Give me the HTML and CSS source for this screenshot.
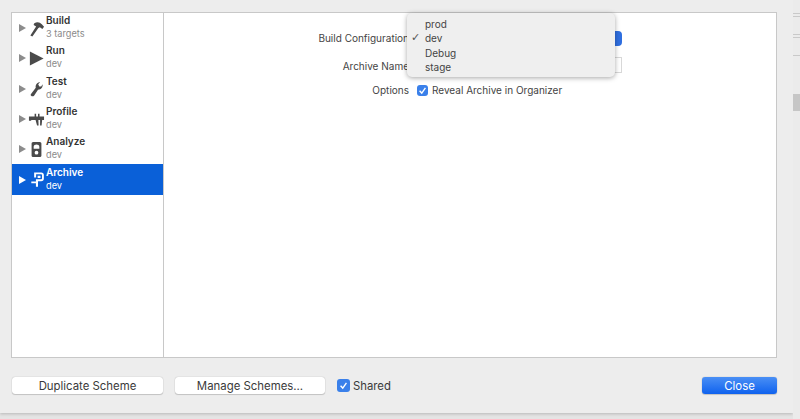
FILE: index.html
```html
<!DOCTYPE html>
<html lang="en">
<head>
    <meta charset="UTF-8">
    <title>Scheme Editor</title>
    <link rel="stylesheet" href="styles.css">
</head>
<body>
    <div class="sheet">
        <div class="panel">
            <!-- Scheme actions -->
            <ul class="sidebar">
                <li class="action">
                    <span class="arrow"></span>
                    <svg class="icon" viewBox="0 0 18 18"><path d="M2.5 16.4 L8.6 7 L6 5.4 L6.4 3.8 C9.4 1.4 12.4 2 14.6 4.6 L17 7.2 L15.2 9.4 L12.6 7.6 L11 8.6 L4.6 17.6 Z"/></svg>
                    <div class="action-text"><b>Build</b><span>3 targets</span></div>
                </li>
                <li class="action">
                    <span class="arrow"></span>
                    <svg class="icon" viewBox="0 0 18 18"><path d="M2 1.5 L16.5 9 L2 16.5 Z"/></svg>
                    <div class="action-text"><b>Run</b><span>dev</span></div>
                </li>
                <li class="action">
                    <span class="arrow"></span>
                    <svg class="icon" viewBox="0 0 18 18"><path d="M4 17.2 C3 17 2.6 16 3 15.2 L8.2 8.2 C7.6 5 9.6 2.4 12.8 2 L10.8 4.6 L12 7 L14 7 L15.4 4.6 C16 7.6 14 10.4 10.6 10.4 L6.4 16.6 C5.8 17.2 5 17.4 4 17.2 Z"/></svg>
                    <div class="action-text"><b>Test</b><span>dev</span></div>
                </li>
                <li class="action">
                    <span class="arrow"></span>
                    <svg class="icon" viewBox="0 0 18 18"><path d="M1 5.8 H7 V2.8 H8.6 V5.8 H10.6 V2.8 H12.2 V5.8 H17 V9.4 H15 L14.4 15.4 H12.8 V9.4 H11 L11.2 15.4 H9.6 L8 9.4 H3.4 V10.4 H1 Z"/></svg>
                    <div class="action-text"><b>Profile</b><span>dev</span></div>
                </li>
                <li class="action">
                    <span class="arrow"></span>
                    <svg class="icon" viewBox="0 0 18 18"><path fill-rule="evenodd" d="M5.5 1 H12.5 C13.6 1 14.2 1.8 14.2 2.8 V15.4 C14.2 16.4 13.6 17 12.5 17 H5.5 C4.4 17 3.8 16.4 3.8 15.4 V2.8 C3.8 1.8 4.4 1 5.5 1 Z M6 8.2 H12 V6.2 C12 2.8 6 2.8 6 6.2 Z M9 10.4 A2 2 0 1 0 9 14.4 A2 2 0 1 0 9 10.4 Z"/></svg>
                    <div class="action-text"><b>Analyze</b><span>dev</span></div>
                </li>
                <li class="action selected">
                    <span class="arrow"></span>
                    <svg class="icon" viewBox="0 0 18 18"><path fill-rule="evenodd" d="M6.5 1.5 H14 C15.8 1.5 16.8 2.6 16.8 4.2 V8 C16.8 9.8 15.8 10.8 14 10.8 H10.6 V16.8 H8.4 V13 H3.5 V11.2 H8.4 V8.8 H14 C14.5 8.8 14.8 8.5 14.8 8 V4.2 C14.8 3.7 14.5 3.4 14 3.4 H8.6 V7 H6.5 Z M10.2 5 H13.2 V7.4 H10.2 Z"/></svg>
                    <div class="action-text"><b>Archive</b><span>dev</span></div>
                </li>
            </ul>

            <!-- Archive options -->
            <div class="form">
                <div class="form-row">
                    <label>Build Configuration</label>
                    <div class="select"><span class="stepper"></span></div>
                </div>
                <div class="form-row">
                    <label>Archive Name</label>
                    <div class="text-field"></div>
                </div>
                <div class="form-row">
                    <label>Options</label>
                    <span class="checkbox small">
                        <svg viewBox="0 0 12 12"><path d="M2.8 6.2 L5.2 8.8 L9.2 3.2"/></svg>
                    </span>
                    <span class="check-label">Reveal Archive in Organizer</span>
                </div>

                <ul class="menu">
                    <li>prod</li>
                    <li class="checked">dev</li>
                    <li>Debug</li>
                    <li>stage</li>
                </ul>
            </div>
        </div>

        <div class="footer">
            <button class="btn duplicate">Duplicate Scheme</button>
            <button class="btn manage">Manage Schemes...</button>
            <span class="checkbox">
                <svg viewBox="0 0 12 12"><path d="M2.8 6.2 L5.2 8.8 L9.2 3.2"/></svg>
            </span>
            <span class="shared">Shared</span>
            <button class="btn primary">Close</button>
        </div>
    </div>

    <!-- Window behind the sheet -->
    <div class="backdrop">
        <span class="tick first"></span>
        <span class="tick"></span>
        <span class="tick gap"></span>
        <span class="tick"></span>
        <span class="tick gap"></span>
        <span class="scroll-thumb"></span>
    </div>
</body>
</html>
```

FILE: styles.css
```css
/* General Reset */
* {
    box-sizing: border-box;
    margin: 0;
    padding: 0;
}

body {
    display: flex;
    align-items: flex-start;
    width: 800px;
    height: 419px;
    overflow: hidden;
    background-color: #e4e4e4;
    font-family: Inter, "Liberation Sans", Arial, sans-serif;
    font-size: 10px;
    color: #3a3a3a;
}

/* Sheet */
.sheet {
    width: 793px;
    height: 413px;
    flex-shrink: 0;
    padding: 12px 16px 0 11px;
    background-color: #ededed;
    box-shadow: 0 1px 3px rgba(0, 0, 0, 0.2);
}

/* Strip of the window behind */
.backdrop {
    flex: 1;
    height: 419px;
    padding-top: 13px;
    background-color: #ebebeb;
}

.tick {
    display: block;
    height: 1px;
    margin-bottom: 2px;
    background-color: #c9c9c9;
}

.tick.gap {
    margin-top: 17px;
}

.scroll-thumb {
    display: block;
    height: 17px;
    margin-top: 38px;
    background-color: #c6c6c6;
}

.panel {
    display: flex;
    height: 346px;
    background-color: #fff;
    border: 1px solid #c8c8c8;
}

/* Sidebar */
.sidebar {
    width: 152px;
    flex-shrink: 0;
    list-style: none;
    border-right: 1px solid #c8c8c8;
}

.action {
    display: flex;
    align-items: center;
    height: 30.3px;
    padding-left: 7px;
}

.arrow {
    width: 0;
    height: 0;
    border-left: 7px solid #8c8c8c;
    border-top: 4.5px solid transparent;
    border-bottom: 4.5px solid transparent;
    margin-right: 2px;
}

.icon {
    width: 17px;
    height: 17px;
    margin-right: 1px;
    fill: #4a4a4a;
}

.action-text {
    display: flex;
    flex-direction: column;
    line-height: 12px;
    margin-top: -2px;
}

.action-text b {
    font-size: 10px;
    font-weight: 600;
    color: #333;
}

.action-text span {
    font-size: 9.2px;
    color: #8a8a8a;
    margin-top: 2px;
}

.selected {
    background-color: #0a60d8;
}

.selected .arrow {
    border-left-color: #fff;
}

.selected .icon {
    fill: #fff;
}

.selected .action-text b,
.selected .action-text span {
    color: #fff;
}

/* Form */
.form {
    position: relative;
    flex: 1;
    padding-top: 15px;
}

.form-row {
    display: flex;
    align-items: center;
    height: 20px;
    margin-bottom: 8px;
}

.form-row:nth-child(2) {
    margin-bottom: 4px;
}

.form-row label {
    width: 245px;
    text-align: right;
    color: #444;
    flex-shrink: 0;
}

.select {
    position: relative;
    width: 205px;
    height: 15px;
    margin-left: 8px;
}

.stepper {
    position: absolute;
    right: 0;
    top: 0;
    width: 14px;
    height: 15px;
    border-radius: 4px;
    background-color: #2f6fe0;
}

.text-field {
    width: 205px;
    height: 16px;
    margin-left: 8px;
    margin-bottom: 2px;
    background-color: #fff;
    border: 1px solid #d8d8d8;
}

.checkbox {
    display: inline-flex;
    align-items: center;
    justify-content: center;
    width: 13px;
    height: 13px;
    border-radius: 3px;
    background-color: #3a80ea;
}

.checkbox svg {
    width: 11px;
    height: 11px;
    fill: none;
    stroke: #fff;
    stroke-width: 1.5;
}

.checkbox.small {
    width: 11px;
    height: 11px;
    margin-left: 8px;
}

.check-label {
    margin-left: 4px;
    color: #444;
}

/* Popup menu */
.menu {
    position: absolute;
    left: 243px;
    top: 0;
    width: 208px;
    height: 64px;
    padding-top: 4px;
    list-style: none;
    background-color: #efefef;
    border-radius: 5px;
    box-shadow: 0 1px 5px rgba(0, 0, 0, 0.35);
}

.menu li {
    position: relative;
    height: 14.4px;
    line-height: 14.4px;
    padding-left: 18px;
    color: #444;
}

.menu .checked::before {
    content: "\2713";
    position: absolute;
    left: 4px;
    font-family: "DejaVu Sans", sans-serif;
    font-size: 11px;
    color: #555;
}

/* Footer buttons */
.footer {
    display: flex;
    align-items: center;
    margin-top: 19px;
}

.btn {
    height: 17px;
    border: none;
    border-radius: 3px;
    background-color: #fff;
    box-shadow: 0 0 1px rgba(0, 0, 0, 0.35), 0 1px 1px rgba(0, 0, 0, 0.15);
    font-family: Inter, "Liberation Sans", Arial, sans-serif;
    font-size: 11.4px;
    color: #3a3a3a;
}

.duplicate {
    width: 151px;
    margin-left: 1px;
}

.manage {
    width: 150px;
    margin-left: 12px;
    margin-right: 12px;
}

.shared {
    margin-left: 3px;
    font-size: 11.3px;
}

.primary {
    width: 75px;
    margin-left: auto;
    background: linear-gradient(#4a8ff5, #0f62ee);
    color: #fff;
}
```
